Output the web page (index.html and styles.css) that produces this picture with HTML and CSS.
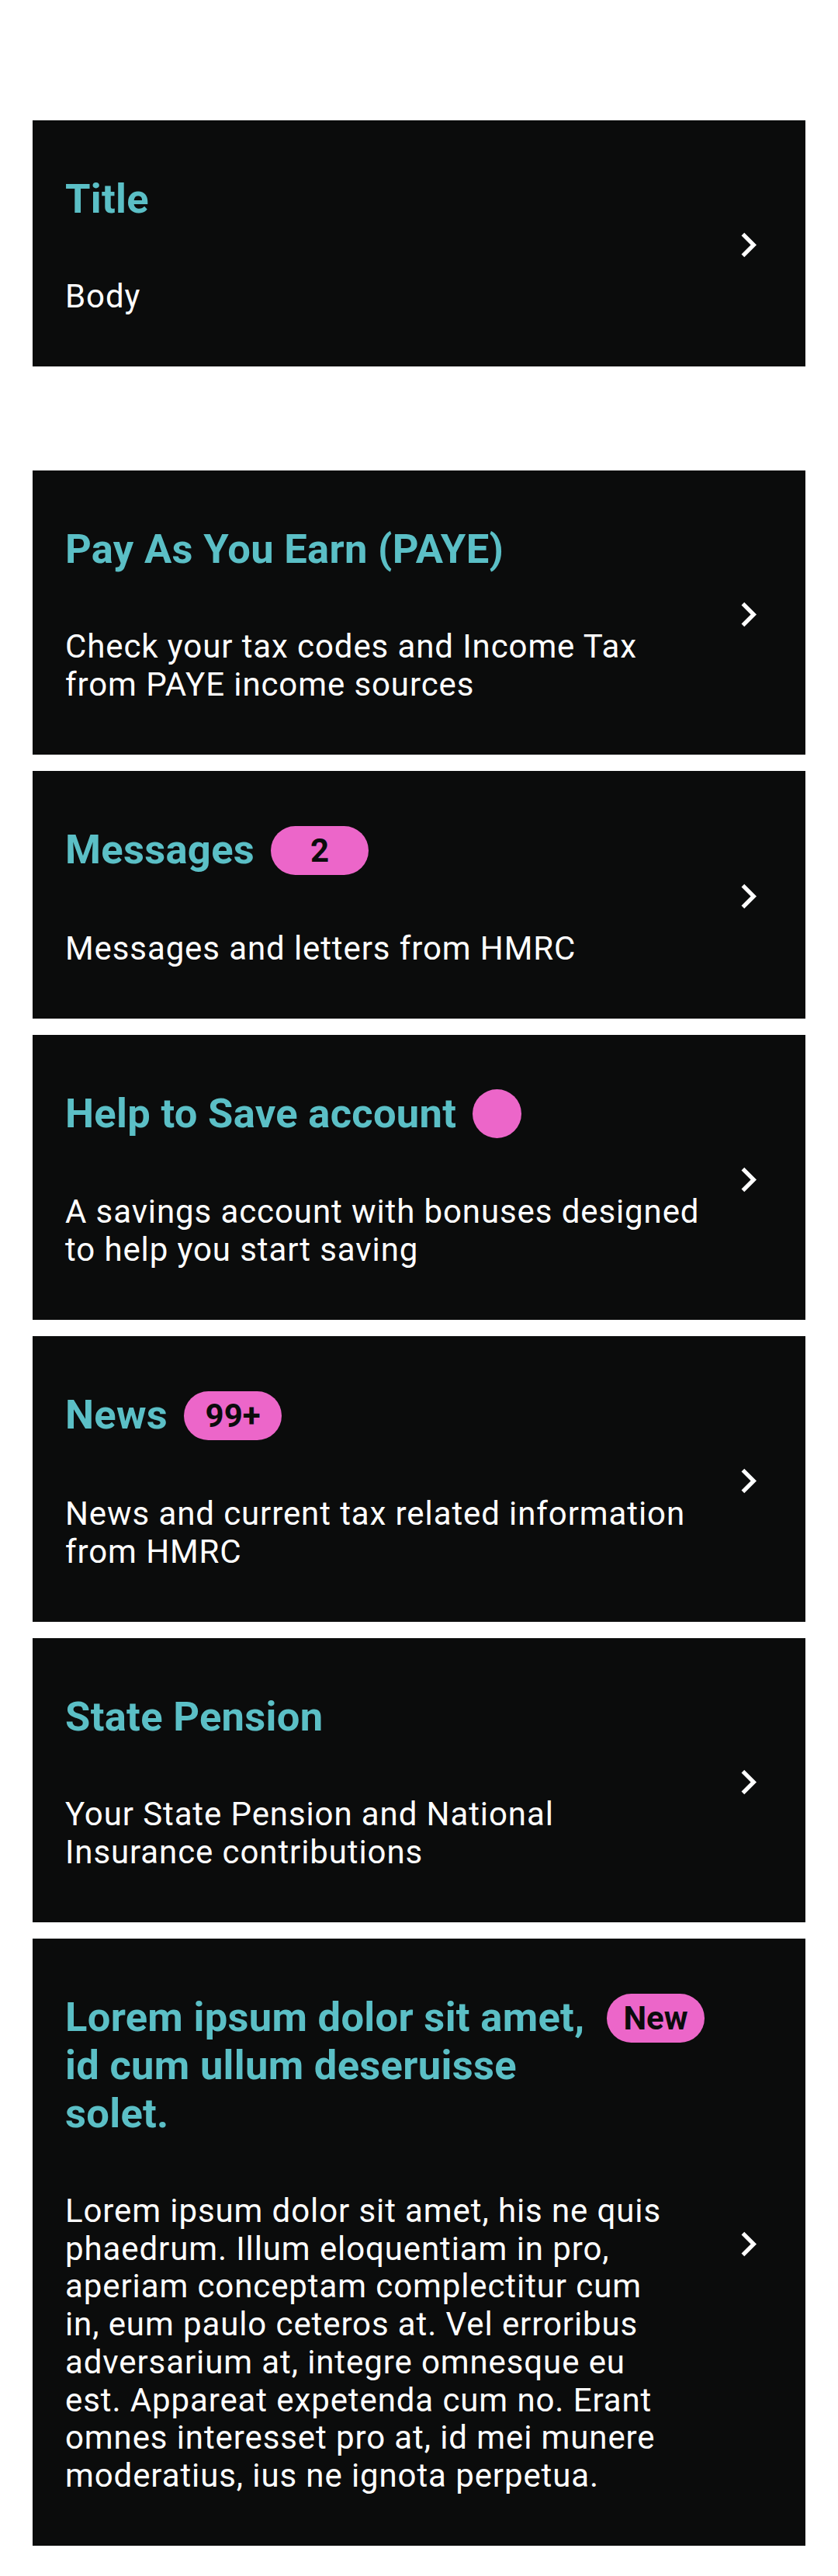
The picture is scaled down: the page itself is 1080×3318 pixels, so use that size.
FILE: index.html
```html
<!DOCTYPE html>
<html lang="en">
<head>
<meta charset="utf-8">
<title>Cards</title>
<link rel="stylesheet" href="styles.css">
</head>
<body>
<main class="page">
  <section class="group group--single">
    <a class="card">
      <div class="card__content">
        <div class="card__head"><h2 class="card__title">Title</h2></div>
        <p class="card__body">Body</p>
      </div>
      <svg class="chevron" viewBox="0 0 24 24"><path d="M10 6 8.59 7.41 13.17 12l-4.58 4.59L10 18l6-6z"/></svg>
    </a>
  </section>

  <section class="group">
    <a class="card">
      <div class="card__content">
        <div class="card__head"><h2 class="card__title">Pay As You Earn (PAYE)</h2></div>
        <p class="card__body">Check your tax codes and Income Tax from PAYE income sources</p>
      </div>
      <svg class="chevron" viewBox="0 0 24 24"><path d="M10 6 8.59 7.41 13.17 12l-4.58 4.59L10 18l6-6z"/></svg>
    </a>

    <a class="card">
      <div class="card__content">
        <div class="card__head"><h2 class="card__title">Messages</h2><span class="badge">2</span></div>
        <p class="card__body">Messages and letters from HMRC</p>
      </div>
      <svg class="chevron" viewBox="0 0 24 24"><path d="M10 6 8.59 7.41 13.17 12l-4.58 4.59L10 18l6-6z"/></svg>
    </a>

    <a class="card">
      <div class="card__content">
        <div class="card__head"><h2 class="card__title">Help to Save account</h2><span class="dot"></span></div>
        <p class="card__body">A savings account with bonuses designed to help you start saving</p>
      </div>
      <svg class="chevron" viewBox="0 0 24 24"><path d="M10 6 8.59 7.41 13.17 12l-4.58 4.59L10 18l6-6z"/></svg>
    </a>

    <a class="card">
      <div class="card__content">
        <div class="card__head"><h2 class="card__title">News</h2><span class="badge">99+</span></div>
        <p class="card__body">News and current tax related information from HMRC</p>
      </div>
      <svg class="chevron" viewBox="0 0 24 24"><path d="M10 6 8.59 7.41 13.17 12l-4.58 4.59L10 18l6-6z"/></svg>
    </a>

    <a class="card">
      <div class="card__content">
        <div class="card__head"><h2 class="card__title">State Pension</h2></div>
        <p class="card__body">Your State Pension and National Insurance contributions</p>
      </div>
      <svg class="chevron" viewBox="0 0 24 24"><path d="M10 6 8.59 7.41 13.17 12l-4.58 4.59L10 18l6-6z"/></svg>
    </a>

    <a class="card card--long">
      <div class="card__content">
        <div class="card__head"><h2 class="card__title">Lorem ipsum dolor sit amet, id cum ullum deseruisse solet.</h2><span class="badge">New</span></div>
        <p class="card__body">Lorem ipsum dolor sit amet, his ne quis phaedrum. Illum eloquentiam in pro, aperiam conceptam complectitur cum in, eum paulo ceteros at. Vel erroribus adversarium at, integre omnesque eu est. Appareat expetenda cum no. Erant omnes interesset pro at, id mei munere moderatius, ius ne ignota perpetua.</p>
      </div>
      <svg class="chevron" viewBox="0 0 24 24"><path d="M10 6 8.59 7.41 13.17 12l-4.58 4.59L10 18l6-6z"/></svg>
    </a>
  </section>
</main>
</body>
</html>
```

FILE: styles.css
```css
* {
  box-sizing: border-box;
}

html, body {
  margin: 0;
  padding: 0;
  background: #ffffff;
}

body {
  font-family: Roboto, "Liberation Sans", Arial, sans-serif;
  -webkit-font-smoothing: antialiased;
}

.page {
  padding: 155px 42px 42px;
  display: flex;
  flex-direction: column;
  gap: 134px;
}

.group {
  display: flex;
  flex-direction: column;
  gap: 21px;
}

.card {
  display: flex;
  align-items: center;
  background: #0b0c0c;
  padding: 70px 42px 65.5px;
  color: #ffffff;
  text-decoration: none;
}

.card__content {
  flex: 1;
  min-width: 0;
  margin-right: 25px;
  display: flex;
  flex-direction: column;
  gap: 71px;
}

.card__head {
  display: flex;
  align-items: flex-start;
  gap: 21px;
}

.card__title {
  margin: 0;
  font-size: 52.5px;
  line-height: 62px;
  font-weight: 700;
  letter-spacing: 0.3px;
  color: #5bbfc6;
}

.card__body {
  margin: 0;
  font-size: 42px;
  line-height: 48.7px;
  font-weight: 400;
  letter-spacing: 0.9px;
  color: #ffffff;
}

.card--long .card__title {
  max-width: 681px;
}

.card--long .card__body {
  max-width: 780px;
}

.badge {
  flex: none;
  width: 126px;
  height: 63px;
  margin-top: 1px;
  border-radius: 31.5px;
  background: #ec66c9;
  color: #0b0c0c;
  font-size: 42px;
  font-weight: 700;
  line-height: 63px;
  text-align: center;
}

.dot {
  flex: none;
  width: 63px;
  height: 63px;
  border-radius: 50%;
  background: #ec66c9;
}

.chevron {
  flex: none;
  width: 63px;
  height: 63px;
  fill: #ffffff;
}
```
